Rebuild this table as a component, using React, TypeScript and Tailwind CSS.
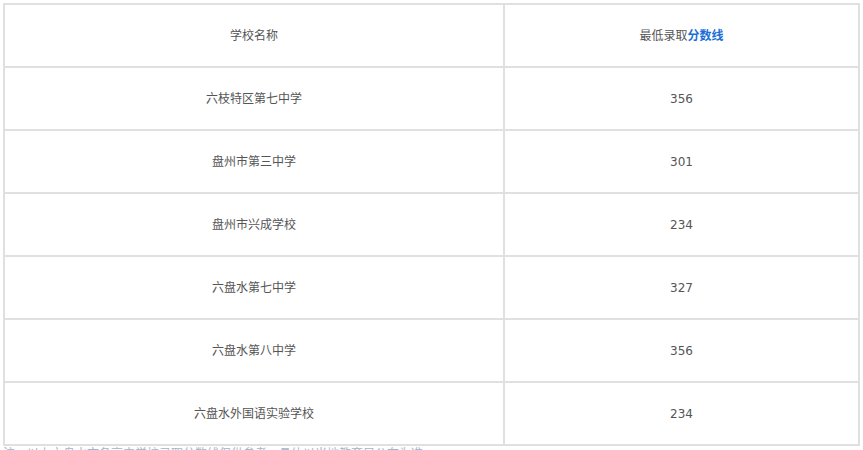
const rows = [
  { name: "六枝特区第七中学", score: "356" },
  { name: "盘州市第三中学", score: "301" },
  { name: "盘州市兴成学校", score: "234" },
  { name: "六盘水第七中学", score: "327" },
  { name: "六盘水第八中学", score: "356" },
  { name: "六盘水外国语实验学校", score: "234" },
];

export default function App() {
  return (
    <div
      className="h-[450px] w-[863px] overflow-hidden bg-white px-[3px] pt-[3px] text-[12px] text-[#555]"
      style={{ fontFamily: '"DejaVu Sans", "Noto Sans CJK SC", sans-serif' }}
    >
      <table className="w-[857px] table-fixed border-collapse">
        <colgroup>
          <col className="w-[500px]" />
          <col />
        </colgroup>
        <thead>
          <tr className="h-[63px]">
            <th className="border-2 border-[#e0e0e0] text-center font-normal">学校名称</th>
            <th className="border-2 border-[#e0e0e0] text-center font-normal">
              最低录取<span className="font-bold text-[#1a6fd6]">分数线</span>
            </th>
          </tr>
        </thead>
        <tbody>
          {rows.map((r, i) => (
            <tr key={i} className="h-[63px]">
              <td className="border-2 border-[#e0e0e0] text-center">{r.name}</td>
              <td className="border-2 border-[#e0e0e0] text-center">{r.score}</td>
            </tr>
          ))}
        </tbody>
      </table>
      <p className="mt-[2px] text-[12px] leading-[12px] text-[#9fb6cc]">注：以上六盘水市各高中学校录取分数线仅供参考，具体以当地教育局公布为准</p>
    </div>
  );
}
